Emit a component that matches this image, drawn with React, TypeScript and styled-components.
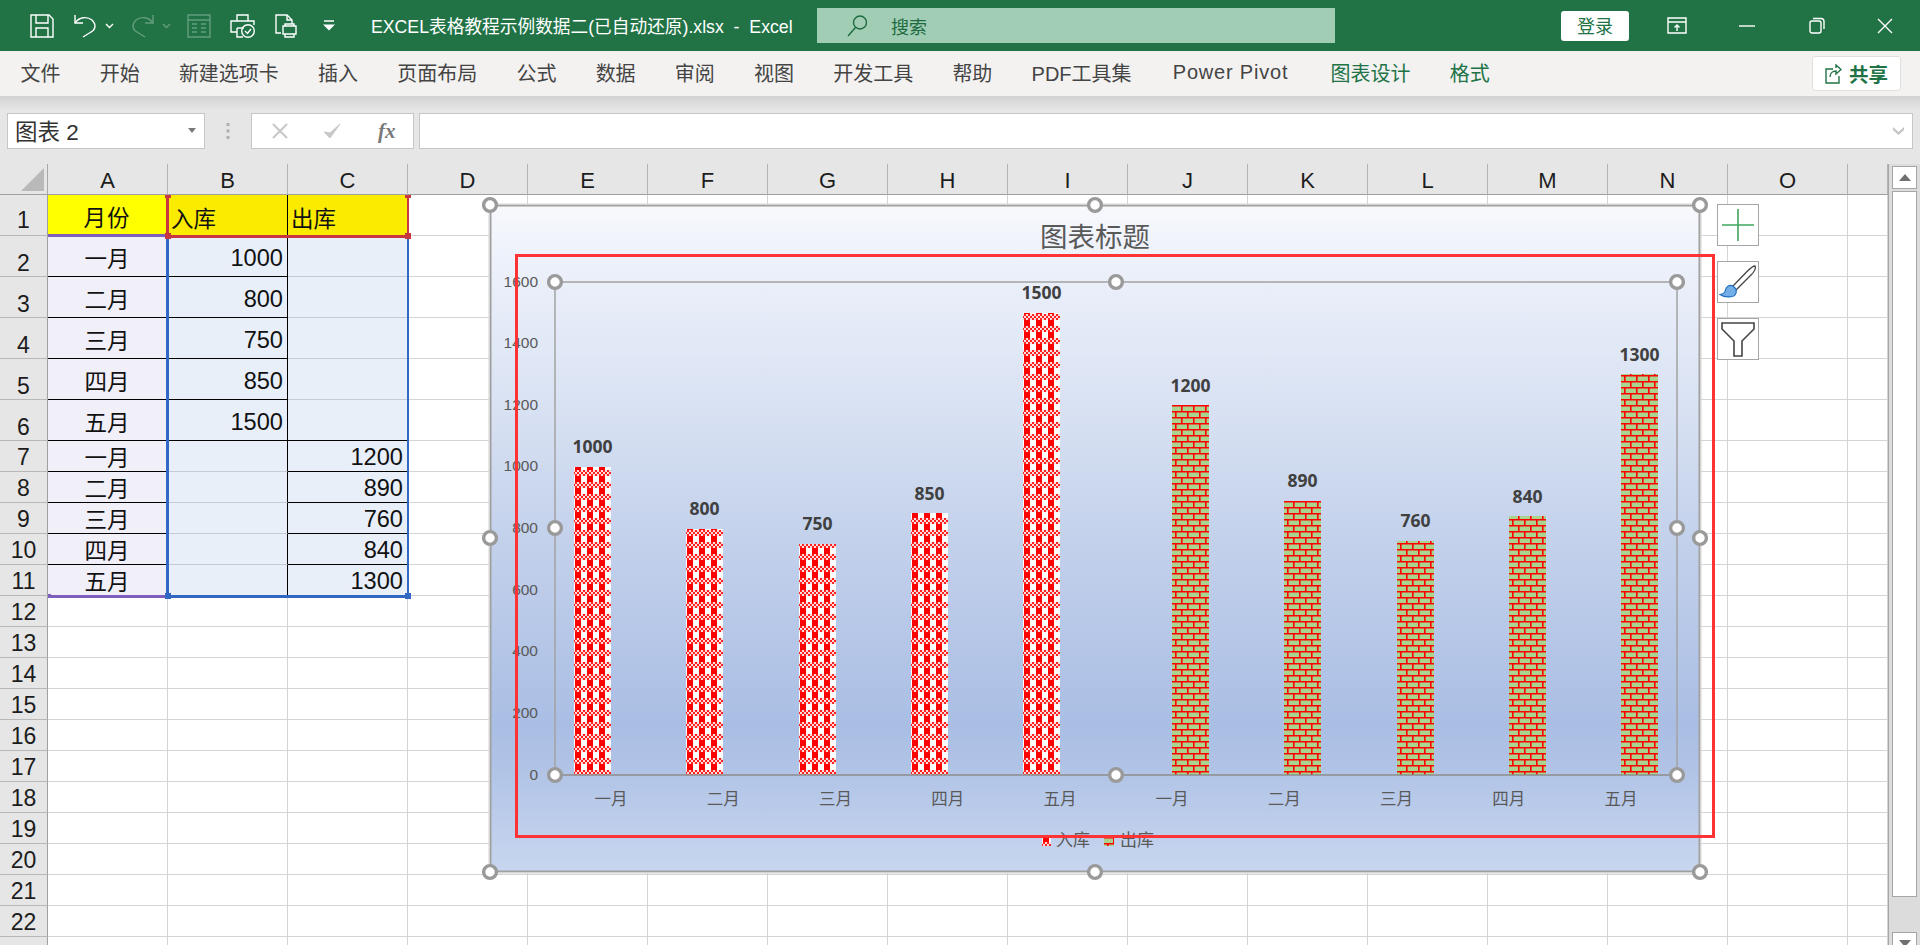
import React from "react";
import styled, { createGlobalStyle } from "styled-components";

const FONT = `"Liberation Sans", "Noto Sans CJK SC", sans-serif`;
const GREEN = "#217346";

const Global = createGlobalStyle`
  html, body {
    margin: 0;
    height: 945px;
    overflow: hidden;
    background: #fff;
    font-family: ${FONT};
  }
`;

const Page = styled.div`
  width: 1920px;
  height: 945px;
  display: flex;
  flex-direction: column;
  overflow: hidden;
`;

/* title bar */
const TitleBar = styled.header`
  height: 51px;
  flex: none;
  background: ${GREEN};
  display: flex;
  align-items: center;
  padding-left: 30px;
  color: #fff;
`;

const Slot = styled.div<{ $w: number }>`
  width: ${(p) => p.$w}px;
  flex: none;
  display: flex;
  align-items: center;
`;

const Mirrored = styled.div`
  display: flex;
  transform: scaleX(-1);
`;

const DocTitle = styled.div`
  width: 446px;
  flex: none;
  font-size: 17.7px;
  white-space: pre;
  margin-top: -2px;
`;

const SearchBox = styled.div`
  width: 518px;
  height: 35px;
  flex: none;
  background: #a0cdb4;
  display: flex;
  align-items: center;
  padding-left: 30px;
  box-sizing: border-box;
  color: #1e6b41;
  font-size: 18px;
  gap: 24px;
`;

const LoginButton = styled.div`
  width: 68px;
  height: 30px;
  flex: none;
  margin: 0 38px 0 226px;
  padding-bottom: 2px;
  box-sizing: border-box;
  background: #fff;
  border-radius: 3px;
  color: ${GREEN};
  font-size: 18px;
  display: flex;
  align-items: center;
  justify-content: center;
`;

/* ribbon tabs */
const TabBar = styled.nav`
  height: 45px;
  flex: none;
  background: #f3f2f1;
  display: flex;
  align-items: center;
  gap: 39.2px;
  padding: 0 19px 0 20.5px;
  position: relative;
`;

const Tab = styled.span<{ $active?: boolean; $spaced?: boolean; $ml?: number }>`
  font-size: 20px;
  color: ${(p) => (p.$active ? GREEN : "#444")};
  letter-spacing: ${(p) => (p.$spaced ? "0.8px" : "0")};
  white-space: nowrap;
  margin-top: -2px;
  margin-left: ${(p) => p.$ml || 0}px;
`;

const ShareButton = styled.div`
  margin-left: auto;
  width: 89px;
  height: 35px;
  box-sizing: border-box;
  background: #fff;
  border: 1px solid #e1dfdd;
  border-radius: 3px;
  display: flex;
  align-items: center;
  justify-content: center;
  gap: 7px;
  color: ${GREEN};
  font-size: 19.5px;
  font-weight: 700;
`;

/* formula bar */
const FormulaRow = styled.div`
  height: 68px;
  flex: none;
  box-sizing: border-box;
  background: linear-gradient(#d2d2d2 0, #e6e6e6 14px);
  padding: 17px 7px 15px 7px;
  display: flex;
  align-items: stretch;
`;

const InputBox = styled.div`
  box-sizing: border-box;
  background: #fff;
  border: 1px solid #c6c6c6;
  display: flex;
  align-items: center;
`;

const NameBox = styled(InputBox)`
  width: 198px;
  flex: none;
  padding: 0 8px 2px 7px;
  justify-content: space-between;
  color: #333;
  font-size: 22.5px;
`;

const Dots = styled.div`
  width: 46px;
  flex: none;
  display: flex;
  align-items: center;
  justify-content: center;
`;

const FxBox = styled(InputBox)`
  width: 163px;
  flex: none;
  padding-left: 19px;
  gap: 34px;
`;

const FxLabel = styled.span`
  font-family: "Liberation Serif", serif;
  font-style: italic;
  font-weight: 700;
  font-size: 21px;
  color: #7a7a7a;
  margin-left: 3px;
`;

const FormulaInput = styled(InputBox)`
  flex: 1;
  margin-left: 5px;
  justify-content: flex-end;
  padding-right: 7px;
`;

/* sheet */
const SheetArea = styled.div`
  flex: 1;
  display: flex;
  min-height: 0;
`;

const Sheet = styled.div`
  width: 1889px;
  flex: none;
  display: flex;
  flex-direction: column;
  border-right: 1px solid #a6a6a6;
  box-sizing: border-box;
`;

const HeaderRow = styled.div`
  height: 31px;
  flex: none;
  display: flex;
  background: #e6e6e6;
`;

const Corner = styled.div`
  width: 48px;
  flex: none;
  box-sizing: border-box;
  border-right: 1px solid #a8a8a8;
  border-bottom: 1px solid #a0a0a0;
  display: flex;
  align-items: center;
  justify-content: flex-end;
  padding: 4px 3px 3px 0;
`;

const ColHead = styled.div<{ $w?: number }>`
  width: ${(p) => (p.$w ? `${p.$w}px` : "120px")};
  flex: ${(p) => (p.$w ? "1" : "none")};
  box-sizing: border-box;
  border-right: 1px solid #b4b4b4;
  border-bottom: 1px solid #a0a0a0;
  display: flex;
  align-items: center;
  justify-content: center;
  font-size: 22px;
  color: #1c1c1c;
  padding-top: 3px;
`;

const Body = styled.div`
  flex: 1;
  position: relative;
  overflow: hidden;
  min-height: 0;
`;

const Row = styled.div<{ $h: number }>`
  height: ${(p) => p.$h}px;
  display: flex;
`;

const RowHead = styled.div<{ $pb?: number }>`
  width: 48px;
  flex: none;
  box-sizing: border-box;
  background: #e6e6e6;
  border-right: 1px solid #a0a0a0;
  border-bottom: 1px solid #b8b8b8;
  display: flex;
  align-items: flex-end;
  justify-content: center;
  font-size: 23px;
  line-height: 23px;
  padding-bottom: ${(p) => p.$pb ?? 2}px;
  color: #1c1c1c;
`;

const Cell = styled.div<{
  $bg?: string;
  $align?: string;
  $under?: string;
  $side?: string;
  $top?: number;
  $num?: boolean;
  $grow?: boolean;
}>`
  width: 120px;
  flex: ${(p) => (p.$grow ? "1" : "none")};
  box-sizing: border-box;
  background: ${(p) => p.$bg || "#fff"};
  border-right: 1px solid ${(p) => p.$side || "#d4d4d4"};
  border-bottom: 1px solid ${(p) => p.$under || "#d4d4d4"};
  display: flex;
  align-items: center;
  justify-content: ${(p) => p.$align || "flex-start"};
  padding: ${(p) => p.$top ?? 0}px 4px 0 3px;
  font-size: ${(p) => (p.$num ? "23.6px" : "22.5px")};
  color: #111;
  white-space: nowrap;
`;

const HeaderText = styled.span`
  letter-spacing: 1px;
`;

const RangeLine = styled.div<{ $x: number; $y: number; $w: number; $h: number; $c: string }>`
  position: absolute;
  left: ${(p) => p.$x}px;
  top: ${(p) => p.$y}px;
  width: ${(p) => p.$w}px;
  height: ${(p) => p.$h}px;
  background: ${(p) => p.$c};
`;

/* chart */
const ChartFrame = styled.div`
  position: absolute;
  left: 490px;
  top: 10px;
  width: 1210px;
  height: 667px;
  background: linear-gradient(
    #f8f9fd 0%,
    #eef2fb 7%,
    #d9e2f3 30%,
    #c3d1eb 50%,
    #aabee4 78%,
    #b0c3e6 84%,
    #c8d6ef 100%
  );
  box-shadow: inset 0 0 0 1.5px #a0a0a0, 0 0 0 1.5px #d4d4d4;
`;

const ChartSvg = styled.svg`
  position: absolute;
  inset: 0;
  width: 100%;
  height: 100%;
  overflow: visible;
  font-family: ${FONT};
`;

const RedFrame = styled.div`
  position: absolute;
  left: 515px;
  top: 59px;
  width: 1200px;
  height: 584px;
  box-sizing: border-box;
  border: 3px solid #ff3333;
  pointer-events: none;
`;

const ChartTools = styled.div`
  position: absolute;
  left: 1717px;
  top: 9px;
  display: flex;
  flex-direction: column;
  gap: 15px;
`;

const ToolButton = styled.div`
  width: 42px;
  height: 42px;
  box-sizing: border-box;
  background: #fff;
  border: 1px solid #a6a6a6;
  display: flex;
  align-items: center;
  justify-content: center;
`;

/* scrollbar */
const ScrollBar = styled.div`
  flex: 1;
  display: flex;
  flex-direction: column;
  background: #dcdcdc;
  padding: 2px 3px 0 3px;
  gap: 2px;
`;

const ScrollBtn = styled.div`
  height: 23px;
  flex: none;
  box-sizing: border-box;
  background: #fff;
  border: 1px solid #a6a6a6;
  display: flex;
  align-items: center;
  justify-content: center;
`;

const ScrollThumb = styled.div`
  height: 706px;
  flex: none;
  box-sizing: border-box;
  background: #fff;
  border: 1px solid #a6a6a6;
  margin-bottom: 33px;
`;

/* icons */
const Ico = ({ w, h, children, op }: { w: number; h: number; children: React.ReactNode; op?: number }) => (
  <svg
    width={w}
    height={h}
    viewBox={`0 0 ${w} ${h}`}
    fill="none"
    stroke="currentColor"
    strokeWidth={1.4}
    opacity={op}
  >
    {children}
  </svg>
);

const SaveIcon = () => (
  <Ico w={24} h={24}>
    <path d="M1 1H19L23 5V23H1Z" />
    <path d="M6 1V9H18V1M6 23V14H18V23" />
  </Ico>
);

const UndoIcon = ({ op }: { op?: number }) => (
  <Ico w={24} h={24} op={op}>
    <path d="M2 1V9H10" />
    <path d="M2 9C6 3 14 2 19 6C24 11 22 16 18 18L10 23" />
  </Ico>
);

const Chevron = ({ op }: { op?: number }) => (
  <Ico w={9} h={6} op={op}>
    <path d="M1 1L4.5 4.5L8 1" />
  </Ico>
);

const FormIcon = () => (
  <Ico w={24} h={24} op={0.3}>
    <path d="M1 1H23V23H1ZM1 6H23" />
    <path d="M5 10H10M14 10H19M5 14H10M14 14H19M5 18H10M14 18H19" />
  </Ico>
);

const PrintCheckIcon = () => (
  <Ico w={25} h={24}>
    <path d="M7 7V1H18V7" />
    <path d="M7 18H1V7H24V11" />
    <path d="M7 14V23H13" />
    <path d="M7 14H14" />
    <circle cx={18} cy={17} r={6.3} />
    <path d="M15 17L17.5 19.5L21 15" />
  </Ico>
);

const PreviewIcon = () => (
  <Ico w={22} h={24}>
    <path d="M6 19H1V1H12L17 6V10" />
    <path d="M12 1V6H17" />
    <path d="M8 12H21V20H8ZM10 20V23H19V20M10 12V10H19V12" />
  </Ico>
);

const CustomizeIcon = () => (
  <svg width={14} height={11} viewBox="0 0 14 11">
    <path d="M2 1H12" stroke="#fff" strokeWidth={1.5} />
    <path d="M1 4.5H13L7 10.5Z" fill="#fff" />
  </svg>
);

const SearchIcon = () => (
  <Ico w={20} h={22}>
    <circle cx={13} cy={7.5} r={6.5} />
    <path d="M8.5 12.5L1 21" />
  </Ico>
);

const RibbonIcon = () => (
  <Ico w={20} h={17}>
    <path d="M1 1H19V16H1ZM1 5H19" />
    <path d="M10 14V8M7.5 10.5L10 8L12.5 10.5" />
  </Ico>
);

const MinIcon = () => (
  <Ico w={16} h={16}>
    <path d="M0 8H16" />
  </Ico>
);

const RestoreIcon = () => (
  <Ico w={16} h={17}>
    <rect x={1} y={4} width={11} height={12} rx={2} />
    <path d="M4 1.5H12C14 1.5 15 2.5 15 4.5V12" />
  </Ico>
);

const CloseIcon = () => (
  <Ico w={16} h={16}>
    <path d="M1 1L15 15M15 1L1 15" />
  </Ico>
);

const ShareIcon = () => (
  <Ico w={17} h={20}>
    <path d="M8 5H1V19H14V12" />
    <path d="M5 13C5 9 8 7 11 7V10L16 5.5L11 1V4" />
  </Ico>
);

const SmallDown = () => (
  <svg width={8} height={5} viewBox="0 0 8 5">
    <path d="M0 0H8L4 5Z" fill="#7a7a7a" />
  </svg>
);

const GripDots = () => (
  <svg width={4} height={16} viewBox="0 0 4 16">
    <rect x={0.5} y={0} width={3} height={3} fill="#b0b0b0" />
    <rect x={0.5} y={6.5} width={3} height={3} fill="#b0b0b0" />
    <rect x={0.5} y={13} width={3} height={3} fill="#b0b0b0" />
  </svg>
);

const CancelIcon = () => (
  <svg width={18} height={18} viewBox="0 0 18 18">
    <path d="M2 2L16 16M16 2L2 16" stroke="#c9c9c9" strokeWidth={2.2} />
  </svg>
);

const CheckIcon = () => (
  <svg width={18} height={18} viewBox="0 0 18 18">
    <path d="M1 10L7 16L17 2L7 11Z" fill="#c9c9c9" stroke="#c9c9c9" strokeWidth={1} />
  </svg>
);

const FormulaChevron = () => (
  <svg width={13} height={10} viewBox="0 0 13 10">
    <path d="M1 1L6.5 6L12 1V4L6.5 9L1 4Z" fill="#c4c4c4" />
  </svg>
);

const CornerMark = () => (
  <svg width={23} height={23} viewBox="0 0 23 23">
    <path d="M23 0V23H0Z" fill="#b9b9b9" />
  </svg>
);

const PlusIcon = () => (
  <svg width={34} height={34} viewBox="0 0 34 34">
    <path d="M17 1V33M1 17H33" stroke="#3fa65e" strokeWidth={1.6} />
  </svg>
);

const BrushIcon = () => (
  <svg width={38} height={38} viewBox="0 0 38 38">
    <path d="M36 3C37 5 35 9 32 12L17 27L13.5 23.5L28 8.5C31 5.5 34 3 36 3Z" fill="#fff" stroke="#444" strokeWidth={1.3} />
    <path
      d="M14 23C10 21 7 24 6.5 27C6 30 4 31 1 31.5C6 35 16 35 17 30C17.4 28 17 26 16.5 25.5Z"
      fill="#74aee6"
      stroke="#1f6fbe"
      strokeWidth={1.2}
    />
  </svg>
);

const FunnelIcon = () => (
  <svg width={36} height={36} viewBox="0 0 36 36">
    <path d="M2 2H34V8L22 20V35H14V20L2 8Z" fill="#fff" stroke="#444" strokeWidth={1.6} />
  </svg>
);

const ScrollArrow = ({ down }: { down?: boolean }) => (
  <svg width={12} height={7} viewBox="0 0 12 7">
    <path d={down ? "M0 0H12L6 7Z" : "M0 7H12L6 0Z"} fill="#707070" />
  </svg>
);

/* chart data */
const MONTHS = ["一月", "二月", "三月", "四月", "五月"];
const INBOUND = [1000, 800, 750, 850, 1500];
const OUTBOUND = [1200, 890, 760, 840, 1300];
const LEFT = 555;
const RIGHT = 1677;
const TOP = 282;
const BASE = 775;
const STEP = (RIGHT - LEFT) / 10;
const BAR_W = 37;
const yOf = (v: number) => BASE - ((BASE - TOP) * v) / 1600;

const CHECKS = Array.from({ length: 18 }, (_, i) => i);

const PlaidPattern = ({ id, x }: { id: string; x: number }) => (
  <pattern id={id} patternUnits="userSpaceOnUse" x={x + 1} y={758} width={12} height={12}>
    <rect width={12} height={12} fill="#fff" />
    <rect x={0} y={0} width={12} height={6} fill="#ffdcdc" />
    {CHECKS.map((i) => {
      const cx = i % 6;
      const cy = Math.floor(i / 6);
      return (cx + cy) % 2 === 0 ? (
        <rect key={i} x={cx * 2} y={cy * 2} width={2} height={2} fill="#ff2020" />
      ) : null;
    })}
    <rect x={0} y={6} width={6} height={6} fill="#ff0000" />
  </pattern>
);

const BrickPattern = ({ id, x }: { id: string; x: number }) => (
  <pattern id={id} patternUnits="userSpaceOnUse" x={x - 3} y={405} width={12} height={12}>
    <rect width={12} height={12} fill="#a9d38f" />
    <rect x={0} y={0} width={12} height={1.5} fill="#ff0000" />
    <rect x={0} y={6} width={12} height={1.5} fill="#ff0000" />
    <rect x={0} y={0} width={1.6} height={6} fill="#ff0000" />
    <rect x={6} y={6} width={1.6} height={6} fill="#ff0000" />
  </pattern>
);

const Handle = ({ x, y }: { x: number; y: number }) => (
  <circle cx={x} cy={y} r={6.4} fill="#fff" stroke="#9a9a9a" strokeWidth={3.4} />
);

const CHART_HANDLES = [
  [490, 205],
  [1095, 205],
  [1700, 205],
  [490, 538],
  [1700, 538],
  [490, 872],
  [1095, 872],
  [1700, 872],
];

const PLOT_HANDLES = [
  [LEFT, TOP],
  [1116, TOP],
  [RIGHT, TOP],
  [LEFT, 528],
  [RIGHT, 528],
  [LEFT, BASE],
  [1116, BASE],
  [RIGHT, BASE],
];

const Chart = () => {
  const bars = [
    ...INBOUND.map((v, i) => ({ v, x: Math.round(LEFT + STEP * (i + 0.5) - BAR_W), kind: "plaid" })),
    ...OUTBOUND.map((v, i) => ({ v, x: Math.round(LEFT + STEP * (i + 5.5)), kind: "brick" })),
  ];
  const cats = [...MONTHS, ...MONTHS];
  return (
    <ChartFrame>
      <ChartSvg viewBox="490 205 1210 667">
        <defs>
          {bars.map((b, i) =>
            b.kind === "plaid" ? (
              <PlaidPattern key={i} id={`bar${i}`} x={b.x} />
            ) : (
              <BrickPattern key={i} id={`bar${i}`} x={b.x} />
            )
          )}
          <PlaidPattern id="legendA" x={1042} />
          <BrickPattern id="legendB" x={1104} />
        </defs>
        <text x={1095} y={237} textAnchor="middle" dominantBaseline="central" fontSize={27.5} fill="#595959">
          图表标题
        </text>
        <path d={`M${LEFT} ${BASE}V${TOP}H${RIGHT}V${BASE}`} fill="none" stroke="#a2a2a2" strokeWidth={1.5} />
        {[0, 200, 400, 600, 800, 1000, 1200, 1400, 1600].map((v) => (
          <text key={v} x={538} y={yOf(v) - 1} textAnchor="end" dominantBaseline="central" fontSize={15.5} fill="#595959">
            {v}
          </text>
        ))}
        {bars.map((b, i) => (
          <g key={i}>
            <rect x={b.x} y={Math.round(yOf(b.v))} width={BAR_W} height={BASE - Math.round(yOf(b.v))} fill={`url(#bar${i})`} />
            <text
              x={b.x + BAR_W / 2}
              y={yOf(b.v) - 20.5}
              textAnchor="middle"
              dominantBaseline="central"
              fontFamily='"Open Sans", sans-serif'
              fontSize={17.5}
              fontWeight={700}
              fill="#404040"
            >
              {b.v}
            </text>
          </g>
        ))}
        <path d={`M${LEFT} ${BASE}H${RIGHT}`} stroke="#8c8c8c" strokeWidth={1.5} />
        {cats.map((c, i) => (
          <text
            key={i}
            x={LEFT + STEP * (i + 0.5)}
            y={799}
            textAnchor="middle"
            dominantBaseline="central"
            fontSize={16.5}
            fill="#595959"
          >
            {c}
          </text>
        ))}
        <rect x={1042} y={836} width={9} height={10} fill="url(#legendA)" />
        <text x={1056} y={840} dominantBaseline="central" fontSize={17} fill="#595959">
          入库
        </text>
        <rect x={1104} y={836} width={10} height={10} fill="url(#legendB)" />
        <text x={1120} y={840} dominantBaseline="central" fontSize={17} fill="#595959">
          出库
        </text>
        {PLOT_HANDLES.map(([x, y]) => (
          <Handle key={`p${x}-${y}`} x={x} y={y} />
        ))}
        {CHART_HANDLES.map(([x, y]) => (
          <Handle key={`c${x}-${y}`} x={x} y={y} />
        ))}
      </ChartSvg>
    </ChartFrame>
  );
};

/* sheet data */
const COLS = "ABCDEFGHIJKLMNO".split("");
const BLACK = "#000";
const SOFT = "#c3cbd6";
const PURPLE_BG = "#f1eff8";
const BLUE_BG = "#e8eff9";

const DATA_ROWS = [
  ["一月", "1000", ""],
  ["二月", "800", ""],
  ["三月", "750", ""],
  ["四月", "850", ""],
  ["五月", "1500", ""],
  ["一月", "", "1200"],
  ["二月", "", "890"],
  ["三月", "", "760"],
  ["四月", "", "840"],
  ["五月", "", "1300"],
];

const BlankCells = () => (
  <>
    {COLS.slice(3).map((c) => (
      <Cell key={c} />
    ))}
    <Cell $grow />
  </>
);

const Ranges = () => (
  <>
    <RangeLine $c="#7f5fbd" $x={51} $y={39} $w={115} $h={2.5} />
    <RangeLine $c="#7f5fbd" $x={48} $y={39} $w={3} $h={3} />
    <RangeLine $c="#7f5fbd" $x={51} $y={400} $w={115} $h={2.5} />
    <RangeLine $c="#7f5fbd" $x={48} $y={399} $w={3} $h={4} />
    <RangeLine $c="#c8363f" $x={166} $y={0} $w={2.5} $h={40} />
    <RangeLine $c="#c8363f" $x={406.5} $y={0} $w={2.5} $h={40} />
    <RangeLine $c="#c8363f" $x={169} $y={40} $w={237} $h={2.5} />
    <RangeLine $c="#3367c4" $x={166} $y={43} $w={2.5} $h={357} />
    <RangeLine $c="#3367c4" $x={406.5} $y={43} $w={2.5} $h={357} />
    <RangeLine $c="#3367c4" $x={169} $y={400} $w={237} $h={2.5} />
    <RangeLine $c="#c8363f" $x={165} $y={0} $w={6} $h={3} />
    <RangeLine $c="#c8363f" $x={405} $y={0} $w={6} $h={3} />
    <RangeLine $c="#c8363f" $x={165} $y={38} $w={6} $h={6} />
    <RangeLine $c="#c8363f" $x={405} $y={38} $w={6} $h={6} />
    <RangeLine $c="#3367c4" $x={165} $y={398} $w={6} $h={6} />
    <RangeLine $c="#3367c4" $x={405} $y={398} $w={6} $h={6} />
  </>
);

export default function App() {
  return (
    <Page>
      <Global />
      <TitleBar>
        <Slot $w={43}>
          <SaveIcon />
        </Slot>
        <Slot $w={32}>
          <UndoIcon />
        </Slot>
        <Slot $w={26}>
          <Chevron />
        </Slot>
        <Slot $w={31}>
          <Mirrored>
            <UndoIcon op={0.3} />
          </Mirrored>
        </Slot>
        <Slot $w={25}>
          <Chevron op={0.3} />
        </Slot>
        <Slot $w={43}>
          <FormIcon />
        </Slot>
        <Slot $w={45}>
          <PrintCheckIcon />
        </Slot>
        <Slot $w={47}>
          <PreviewIcon />
        </Slot>
        <Slot $w={49}>
          <CustomizeIcon />
        </Slot>
        <DocTitle>{"EXCEL表格教程示例数据二(已自动还原).xlsx  -  Excel"}</DocTitle>
        <SearchBox>
          <SearchIcon />
          搜索
        </SearchBox>
        <LoginButton>登录</LoginButton>
        <Slot $w={72}>
          <RibbonIcon />
        </Slot>
        <Slot $w={70}>
          <MinIcon />
        </Slot>
        <Slot $w={68}>
          <RestoreIcon />
        </Slot>
        <Slot $w={16}>
          <CloseIcon />
        </Slot>
      </TitleBar>
      <TabBar>
        {["文件", "开始", "新建选项卡", "插入", "页面布局", "公式", "数据", "审阅", "视图", "开发工具", "帮助"].map((t) => (
          <Tab key={t}>{t}</Tab>
        ))}
        <Tab>PDF工具集</Tab>
        <Tab $spaced $ml={2}>
          Power Pivot
        </Tab>
        <Tab $active $ml={3}>
          图表设计
        </Tab>
        <Tab $active>格式</Tab>
        <ShareButton>
          <ShareIcon />
          共享
        </ShareButton>
      </TabBar>
      <FormulaRow>
        <NameBox>
          图表 2
          <SmallDown />
        </NameBox>
        <Dots>
          <GripDots />
        </Dots>
        <FxBox>
          <CancelIcon />
          <CheckIcon />
          <FxLabel>fx</FxLabel>
        </FxBox>
        <FormulaInput>
          <FormulaChevron />
        </FormulaInput>
      </FormulaRow>
      <SheetArea>
        <Sheet>
          <HeaderRow>
            <Corner>
              <CornerMark />
            </Corner>
            {COLS.map((c) => (
              <ColHead key={c}>{c}</ColHead>
            ))}
            <ColHead $w={40} />
          </HeaderRow>
          <Body>
            <Row $h={41}>
              <RowHead $pb={3}>1</RowHead>
              <Cell $bg="#ffff00" $align="center" $top={2} $side="#ffff00" $under="#ffff00">
                <HeaderText>月份</HeaderText>
              </Cell>
              <Cell $bg="#faeb00" $top={3} $side={BLACK} $under="#faeb00">
                入库
              </Cell>
              <Cell $bg="#faeb00" $top={3} $under="#faeb00">
                出库
              </Cell>
              <BlankCells />
            </Row>
            {DATA_ROWS.map((r, i) => (
              <Row key={i} $h={i < 5 ? 41 : 31}>
                <RowHead $pb={i < 5 ? 1 : 2}>{i + 2}</RowHead>
                <Cell $bg={PURPLE_BG} $align="center" $top={i < 5 ? 2 : 0} $under={BLACK} $side={PURPLE_BG}>
                  {r[0]}
                </Cell>
                <Cell
                  $bg={BLUE_BG}
                  $align="flex-end"
                  $num
                  $top={i < 5 ? 4 : 2}
                  $under={i < 5 ? BLACK : SOFT}
                  $side={BLACK}
                >
                  {r[1]}
                </Cell>
                <Cell
                  $bg={BLUE_BG}
                  $align="flex-end"
                  $num
                  $top={i < 5 ? 4 : 2}
                  $under={i >= 4 ? BLACK : SOFT}
                  $side={BLUE_BG}
                >
                  {r[2]}
                </Cell>
                <BlankCells />
              </Row>
            ))}
            {Array.from({ length: 12 }, (_, i) => (
              <Row key={i} $h={31}>
                <RowHead>{i < 11 ? i + 12 : ""}</RowHead>
                <Cell />
                <Cell />
                <Cell />
                <BlankCells />
              </Row>
            ))}
            <Ranges />
            <Chart />
            <RedFrame />
            <ChartTools>
              <ToolButton>
                <PlusIcon />
              </ToolButton>
              <ToolButton>
                <BrushIcon />
              </ToolButton>
              <ToolButton>
                <FunnelIcon />
              </ToolButton>
            </ChartTools>
          </Body>
        </Sheet>
        <ScrollBar>
          <ScrollBtn>
            <ScrollArrow />
          </ScrollBtn>
          <ScrollThumb />
          <ScrollBtn>
            <ScrollArrow down />
          </ScrollBtn>
        </ScrollBar>
      </SheetArea>
    </Page>
  );
}
